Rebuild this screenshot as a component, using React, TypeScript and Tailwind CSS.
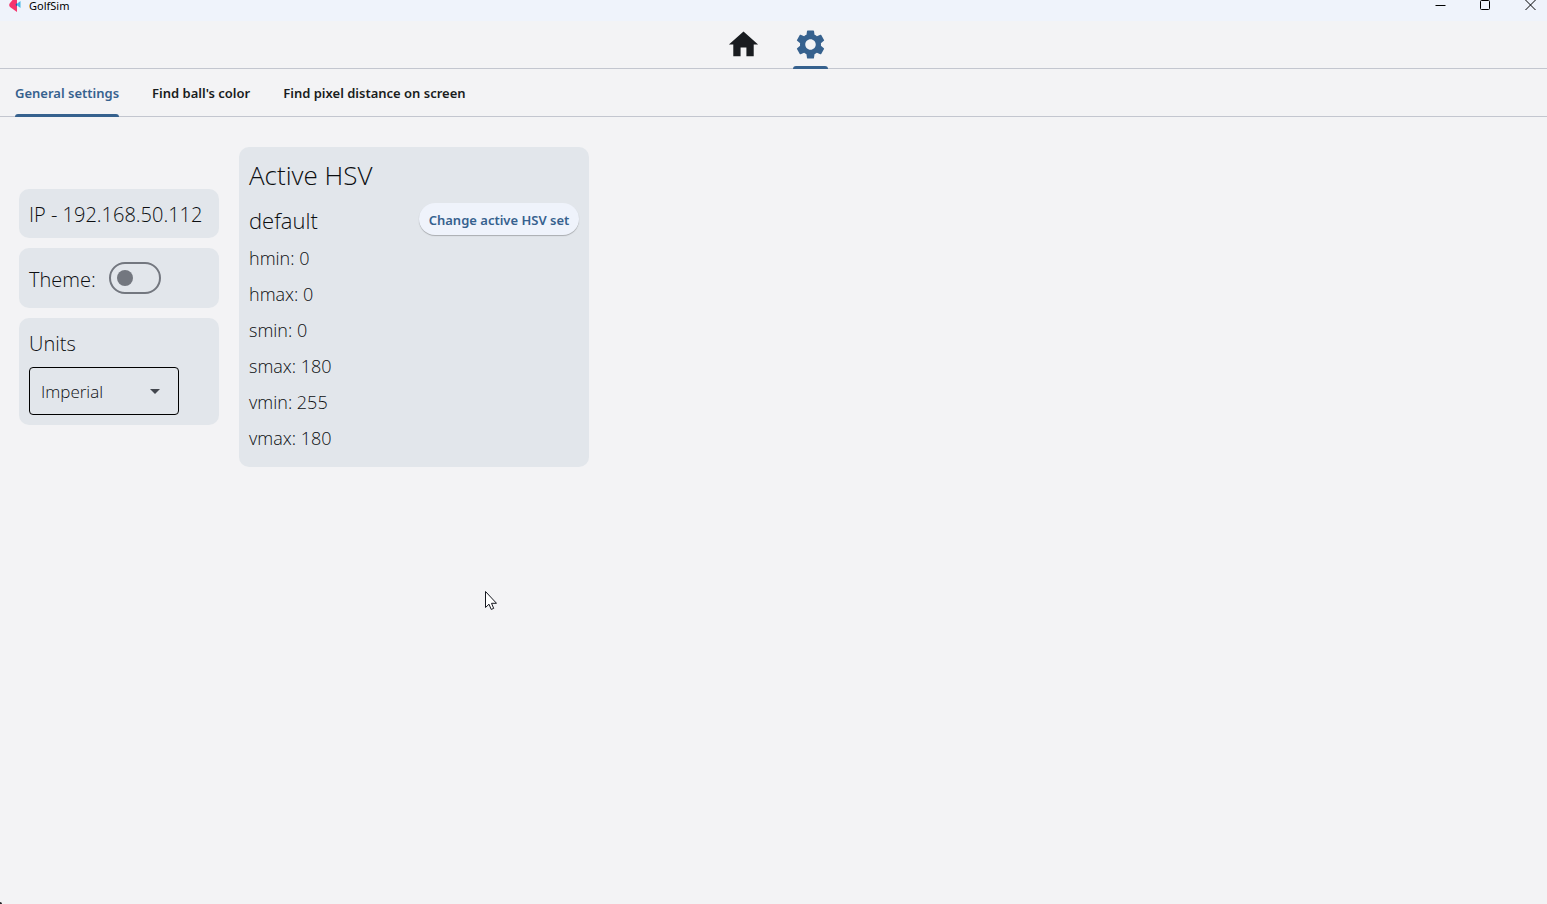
import { useState } from "react";
import { MdArrowDropDown, MdHome, MdSettings } from "react-icons/md";

const HSV_VALUES = [
  { name: "hmin", value: 0 },
  { name: "hmax", value: 0 },
  { name: "smin", value: 0 },
  { name: "smax", value: 180 },
  { name: "vmin", value: 255 },
  { name: "vmax", value: 180 },
];

const TABS = ["General settings", "Find ball's color", "Find pixel distance on screen"];

function TitleBar() {
  return (
    <header className="flex h-[21px] items-start justify-between bg-[#eff3fb] text-black">
      <div className="flex items-start gap-2 pl-[9px]">
        <svg className="h-3 w-3" viewBox="0 0 12 12" aria-hidden="true">
          <path d="M11.500 1 7 4.500l4.500 3.500z" fill="#45b8e8" />
          <path d="M3.500 0H8v12L1 7Q-.6 5 1 3z" fill="#f5356f" />
          <path d="M8 3 6.500 4.800 8 6.500z" fill="#1d62b0" />
        </svg>
        <h1 className="font-['Noto_Sans',sans-serif] text-[11px] leading-3 font-normal">GolfSim</h1>
      </div>
      <div className="-mr-[6px] flex">
        <button aria-label="Minimize" className="flex h-[11px] w-[45px] items-center justify-center">
          <svg className="h-[11px] w-[11px]" viewBox="0 0 11 11" aria-hidden="true">
            <path d="M.5 5.500h10" stroke="currentColor" />
          </svg>
        </button>
        <button aria-label="Maximize" className="flex h-[11px] w-[45px] items-center justify-center">
          <svg className="h-[11px] w-[11px]" viewBox="0 0 11 11" aria-hidden="true">
            <rect x=".5" y=".5" width="9" height="9" rx="1" fill="none" stroke="currentColor" />
          </svg>
        </button>
        <button aria-label="Close" className="flex h-[11px] w-[45px] items-center justify-center">
          <svg className="h-[11px] w-[11px]" viewBox="0 0 11 11" aria-hidden="true">
            <path d="m.5 0 10 10M10.500 0l-10 10" stroke="currentColor" />
          </svg>
        </button>
      </div>
    </header>
  );
}

function MainNav() {
  return (
    <nav className="flex h-12 justify-center border-b border-[#c3c6cf] pl-[7px]">
      <a href="#home" aria-label="Home" className="flex items-center px-4">
        <MdHome className="h-[35px] w-[35px] text-[#191c20]" />
      </a>
      <a href="#settings" aria-label="Settings" aria-current="page" className="flex flex-col px-4">
        <span className="flex flex-1 items-center pt-[2px]">
          <MdSettings className="h-[35px] w-[35px] text-[#36618e]" />
        </span>
        <span className="-mb-px h-[3px] rounded-t-[3px] bg-[#36618e]" />
      </a>
    </nav>
  );
}

function SettingsTabs() {
  const [active, setActive] = useState(0);
  return (
    <div role="tablist" className="flex h-12 gap-[33px] border-b border-[#c3c6cf] px-[15px]">
      {TABS.map((tab, index) => (
        <button
          key={tab}
          role="tab"
          aria-selected={index === active}
          onClick={() => setActive(index)}
          className={
            index === active
              ? "-mb-px flex flex-col font-['Noto_Sans',sans-serif] text-[13px] font-semibold text-[#36618e]"
              : "-mb-px flex flex-col font-['Noto_Sans',sans-serif] text-[13px] font-semibold text-[#191c20]"
          }
        >
          <span className="flex flex-1 items-center pt-1">{tab}</span>
          <span
            className={
              index === active ? "h-[3px] w-full rounded-t-[3px] bg-[#36618e]" : "h-[3px] w-full"
            }
          />
        </button>
      ))}
    </div>
  );
}

function ThemeCard() {
  const [dark, setDark] = useState(false);
  return (
    <div className="flex h-[60px] items-center gap-[14px] rounded-[10px] bg-[#e2e6eb] px-[10px]">
      <label htmlFor="theme" className="w-[66px] pt-1 text-[20px]">
        Theme:
      </label>
      <input
        id="theme"
        type="checkbox"
        role="switch"
        checked={dark}
        onChange={(event) => setDark(event.target.checked)}
        className="flex h-8 w-[52px] appearance-none items-center rounded-full border-2 border-[#73777f] px-[6px] before:h-4 before:w-4 before:rounded-full before:bg-[#73777f] checked:justify-end"
      />
    </div>
  );
}

function UnitsCard() {
  return (
    <div className="flex flex-col gap-[9px] rounded-[10px] bg-[#e2e6eb] p-[10px]">
      <label htmlFor="units" className="pt-[2px] text-[20px] leading-7">
        Units
      </label>
      <div className="grid w-[150px] items-center">
        <select
          id="units"
          defaultValue="Imperial"
          className="col-start-1 row-start-1 h-12 appearance-none rounded-[4px] border border-black bg-transparent px-[11px] pt-[2px] text-[17px]"
        >
          <option>Imperial</option>
          <option>Metric</option>
        </select>
        <MdArrowDropDown className="pointer-events-none col-start-1 row-start-1 mr-3 h-6 w-6 justify-self-end text-[#43474e]" />
      </div>
    </div>
  );
}

function HsvCard() {
  return (
    <section className="flex w-[350px] flex-col rounded-[10px] bg-[#e2e6eb] px-[10px] py-[11px]">
      <h2 className="text-[26px] leading-[34px]">Active HSV</h2>
      <div className="flex items-center justify-between pt-[11px]">
        <h3 className="pt-[2px] text-[22px] leading-7">default</h3>
        <button className="h-8 w-40 rounded-full bg-[#eff3fb] pt-[3px] font-['Noto_Sans',sans-serif] text-[13px] font-semibold text-[#36618e] shadow-[0_1px_1px_rgba(0,0,0,0.25)]">
          Change active HSV set
        </button>
      </div>
      <ul className="pt-[5px]">
        {HSV_VALUES.map(({ name, value }) => (
          <li key={name} className="text-[18px] leading-9">
            {name}: {value}
          </li>
        ))}
      </ul>
    </section>
  );
}

export default function App() {
  return (
    <div className="relative min-h-screen bg-[#f3f3f5] font-['Open_Sans','Noto_Sans',sans-serif] font-light text-[#0c0e11]">
      <TitleBar />
      <MainNav />
      <SettingsTabs />
      <main className="flex items-center gap-5 px-[19px] pt-[30px]">
        <div className="flex w-[200px] flex-col gap-[10px]">
          <div className="flex h-[49px] items-center rounded-[10px] bg-[#e2e6eb] px-[10px] pt-[3px] text-[20px]">
            IP - 192.168.50.112
          </div>
          <ThemeCard />
          <UnitsCard />
        </div>
        <HsvCard />
      </main>
      <svg
        className="pointer-events-none absolute top-[591px] left-[485px] h-[19px] w-3"
        viewBox="0 0 12 19"
        aria-hidden="true"
      >
        <path
          d="M.5.5v16l3.500-3.300 2.200 5.200 2.500-1-2.200-5.100h5z"
          fill="white"
          stroke="#15171f"
          strokeLinejoin="round"
        />
      </svg>
      <span className="absolute bottom-0 left-0 h-[2px] w-[2px] rounded-tr-full bg-[#202124]" />
    </div>
  );
}
